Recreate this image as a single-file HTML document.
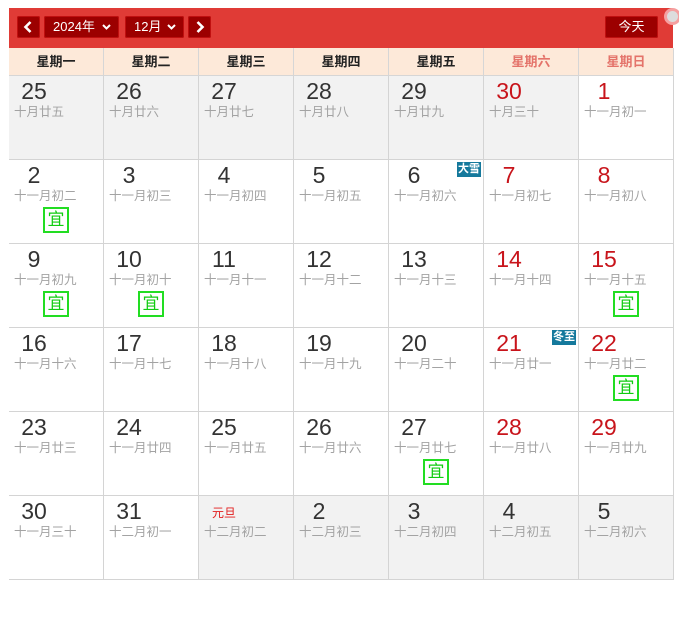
<!DOCTYPE html>
<html><head><meta charset="utf-8"><style>
*{margin:0;padding:0;box-sizing:border-box}
body{width:679px;height:617px;background:#fff;position:relative;overflow:hidden;font-family:"Liberation Sans","Noto Sans CJK SC",sans-serif}
.hd{position:absolute;left:9px;top:8px;width:664px;height:40px;background:#e03b36}
.btn{position:absolute;top:16px;height:22px;background:#9c0000;border-radius:2px;color:#fff;font-size:13px;line-height:22px;box-shadow:0 0 0 1px #c01010 inset}
.wk{position:absolute;top:48px;height:28px;background:#fde9d9;border-right:1px solid #d6d6d6;border-bottom:1px solid #d6d6d6;width:95px;text-align:center;font-size:13px;font-weight:bold;line-height:27px;color:#222}
.wk.r{color:#e4736a}
.c{position:absolute;width:95px;height:84px;border-right:1px solid #d4d4d4;border-bottom:1px solid #d4d4d4;background:#fff}
.c.g{background:#f2f2f2}
.c b{position:absolute;left:3px;width:44px;top:1px;text-align:center;font-weight:normal;font-size:23px;line-height:28px;color:#333}
.c.r b{color:#c8141b}
.c i{position:absolute;left:5px;top:28px;font-style:normal;font-size:12.5px;line-height:16px;color:#a3a3a3;white-space:nowrap}
.c s{position:absolute;left:34px;top:47px;width:26px;height:26px;border:2px solid #22dd22;color:#11cc11;text-decoration:none;font-size:17px;line-height:22px;text-align:center}
.c u{position:absolute;right:2px;top:2px;width:24px;height:15px;background:#15799c;color:#fff;text-decoration:none;font-size:11px;font-weight:bold;line-height:15px;text-align:center}
.c em{position:absolute;left:13px;top:8px;font-style:normal;font-size:12px;color:#e21b1b}
</style></head><body>
<div class="hd"></div>
<div class="btn" style="left:17px;width:23px"><svg width="23" height="22" viewBox="0 0 23 22"><path d="M13.5 6 L8.5 11 L13.5 16" stroke="#fff" stroke-width="2.6" fill="none"/></svg></div>
<div class="btn" style="left:44px;width:75px;padding-left:9px">2024年<svg style="position:absolute;left:58px;top:8px" width="9" height="6" viewBox="0 0 9 6"><path d="M1 1 L4.5 4.5 L8 1" stroke="#fff" stroke-width="2" fill="none"/></svg></div>
<div class="btn" style="left:125px;width:59px;padding-left:9px">12月<svg style="position:absolute;left:42px;top:8px" width="9" height="6" viewBox="0 0 9 6"><path d="M1 1 L4.5 4.5 L8 1" stroke="#fff" stroke-width="2" fill="none"/></svg></div>
<div class="btn" style="left:188px;width:23px"><svg width="23" height="22" viewBox="0 0 23 22"><path d="M9.5 6 L14.5 11 L9.5 16" stroke="#fff" stroke-width="2.6" fill="none"/></svg></div>
<div class="btn" style="left:605px;width:53px;text-align:center">今天</div>
<div style="position:absolute;left:664px;top:8px;width:17px;height:17px;border-radius:50%;border:3px solid #f5a0a0;background:#ddd"></div>

<div class="wk" style="left:9px">星期一</div>
<div class="wk" style="left:104px">星期二</div>
<div class="wk" style="left:199px">星期三</div>
<div class="wk" style="left:294px">星期四</div>
<div class="wk" style="left:389px">星期五</div>
<div class="wk r" style="left:484px">星期六</div>
<div class="wk r" style="left:579px">星期日</div>

<div class="c g" style="left:9px;top:76px"><b>25</b><i>十月廿五</i></div>
<div class="c g" style="left:104px;top:76px"><b>26</b><i>十月廿六</i></div>
<div class="c g" style="left:199px;top:76px"><b>27</b><i>十月廿七</i></div>
<div class="c g" style="left:294px;top:76px"><b>28</b><i>十月廿八</i></div>
<div class="c g" style="left:389px;top:76px"><b>29</b><i>十月廿九</i></div>
<div class="c g r" style="left:484px;top:76px"><b>30</b><i>十月三十</i></div>
<div class="c r" style="left:579px;top:76px"><b>1</b><i>十一月初一</i></div>

<div class="c" style="left:9px;top:160px"><b>2</b><i>十一月初二</i><s>宜</s></div>
<div class="c" style="left:104px;top:160px"><b>3</b><i>十一月初三</i></div>
<div class="c" style="left:199px;top:160px"><b>4</b><i>十一月初四</i></div>
<div class="c" style="left:294px;top:160px"><b>5</b><i>十一月初五</i></div>
<div class="c" style="left:389px;top:160px"><b>6</b><i>十一月初六</i><u>大雪</u></div>
<div class="c r" style="left:484px;top:160px"><b>7</b><i>十一月初七</i></div>
<div class="c r" style="left:579px;top:160px"><b>8</b><i>十一月初八</i></div>

<div class="c" style="left:9px;top:244px"><b>9</b><i>十一月初九</i><s>宜</s></div>
<div class="c" style="left:104px;top:244px"><b>10</b><i>十一月初十</i><s>宜</s></div>
<div class="c" style="left:199px;top:244px"><b>11</b><i>十一月十一</i></div>
<div class="c" style="left:294px;top:244px"><b>12</b><i>十一月十二</i></div>
<div class="c" style="left:389px;top:244px"><b>13</b><i>十一月十三</i></div>
<div class="c r" style="left:484px;top:244px"><b>14</b><i>十一月十四</i></div>
<div class="c r" style="left:579px;top:244px"><b>15</b><i>十一月十五</i><s>宜</s></div>

<div class="c" style="left:9px;top:328px"><b>16</b><i>十一月十六</i></div>
<div class="c" style="left:104px;top:328px"><b>17</b><i>十一月十七</i></div>
<div class="c" style="left:199px;top:328px"><b>18</b><i>十一月十八</i></div>
<div class="c" style="left:294px;top:328px"><b>19</b><i>十一月十九</i></div>
<div class="c" style="left:389px;top:328px"><b>20</b><i>十一月二十</i></div>
<div class="c r" style="left:484px;top:328px"><b>21</b><i>十一月廿一</i><u>冬至</u></div>
<div class="c r" style="left:579px;top:328px"><b>22</b><i>十一月廿二</i><s>宜</s></div>

<div class="c" style="left:9px;top:412px"><b>23</b><i>十一月廿三</i></div>
<div class="c" style="left:104px;top:412px"><b>24</b><i>十一月廿四</i></div>
<div class="c" style="left:199px;top:412px"><b>25</b><i>十一月廿五</i></div>
<div class="c" style="left:294px;top:412px"><b>26</b><i>十一月廿六</i></div>
<div class="c" style="left:389px;top:412px"><b>27</b><i>十一月廿七</i><s>宜</s></div>
<div class="c r" style="left:484px;top:412px"><b>28</b><i>十一月廿八</i></div>
<div class="c r" style="left:579px;top:412px"><b>29</b><i>十一月廿九</i></div>

<div class="c" style="left:9px;top:496px"><b>30</b><i>十一月三十</i></div>
<div class="c" style="left:104px;top:496px"><b>31</b><i>十二月初一</i></div>
<div class="c g" style="left:199px;top:496px"><em>元旦</em><i>十二月初二</i></div>
<div class="c g" style="left:294px;top:496px"><b>2</b><i>十二月初三</i></div>
<div class="c g" style="left:389px;top:496px"><b>3</b><i>十二月初四</i></div>
<div class="c g" style="left:484px;top:496px"><b>4</b><i>十二月初五</i></div>
<div class="c g" style="left:579px;top:496px"><b>5</b><i>十二月初六</i></div>
</body></html>
